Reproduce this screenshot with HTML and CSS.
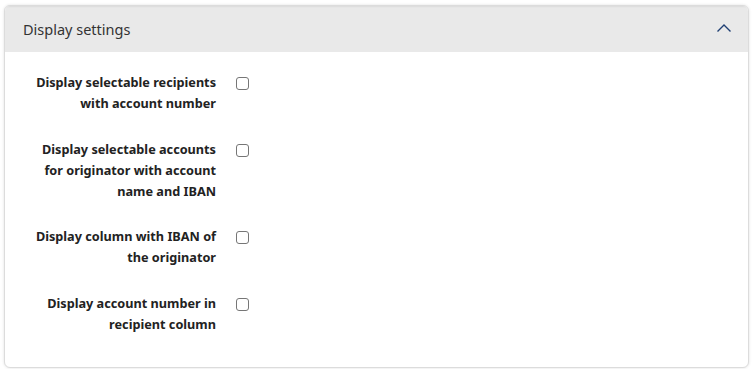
FILE: index.html
```html
<!DOCTYPE html>
<html lang="en">
<head>
<meta charset="utf-8">
<title>Display settings</title>
<link rel="stylesheet" href="styles.css">
</head>
<body>
<section class="card">
  <header class="card-header">
    <h2 class="card-title">Display settings</h2>
    <svg class="chevron" width="16" height="10" viewBox="0 0 16 10" aria-hidden="true">
      <polyline points="1.5,8.5 8,2 14.5,8.5" fill="none" stroke="#1f3f73" stroke-width="1.4"/>
    </svg>
  </header>
  <div class="card-body">
    <div class="row">
      <label class="label" for="c1">Display selectable recipients with account number</label>
      <input class="check" type="checkbox" id="c1">
    </div>
    <div class="row">
      <label class="label" for="c2">Display selectable accounts for originator with account name and IBAN</label>
      <input class="check" type="checkbox" id="c2">
    </div>
    <div class="row">
      <label class="label" for="c3">Display column with IBAN of the originator</label>
      <input class="check" type="checkbox" id="c3">
    </div>
    <div class="row">
      <label class="label" for="c4">Display account number in recipient column</label>
      <input class="check" type="checkbox" id="c4">
    </div>
  </div>
</section>
</body>
</html>
```
FILE: styles.css
```css
html, body {
  margin: 0;
  padding: 0;
  background: #ffffff;
}
body {
  padding: 5px 6px 4px 4px;
  font-family: "Noto Sans", "Open Sans", sans-serif;
  color: #222222;
}
.card {
  border: 1px solid #dcdcdc;
  border-radius: 6px;
  box-shadow: 0 0 3px rgba(0, 0, 0, 0.12);
  overflow: hidden;
  background: #ffffff;
}
.card-header {
  height: 46px;
  background: #e9e9e9;
  box-shadow: inset 0 2px 2px -1px rgba(0, 0, 0, 0.06);
  display: flex;
  align-items: center;
  justify-content: space-between;
  padding: 0 16px 0 18px;
}
.card-title {
  margin: 0;
  font-size: 14.5px;
  font-weight: 400;
  color: #333333;
}
.chevron {
  display: block;
  margin-top: -2px;
}
.card-body {
  padding: 20px 0 32px 0;
  display: flex;
  flex-direction: column;
  gap: 24.5px;
}
.row {
  display: flex;
  align-items: flex-start;
}
.label {
  width: 190px;
  margin-left: 21px;
  text-align: right;
  font-size: 12.7px;
  font-weight: 700;
  line-height: 21px;
  color: #222222;
}
.check {
  appearance: none;
  -webkit-appearance: none;
  width: 13px;
  height: 13px;
  margin: 5px 0 0 20px;
  border: 1px solid #767676;
  border-radius: 3px;
  background: #ffffff;
  box-sizing: border-box;
  flex: none;
}
```
